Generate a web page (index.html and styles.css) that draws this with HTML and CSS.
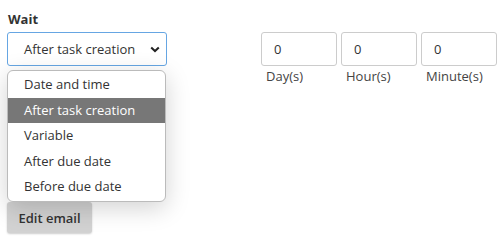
FILE: index.html
```html
<!DOCTYPE html>
<html>
<head>
<meta charset="utf-8">
<link rel="stylesheet" href="styles.css">
</head>
<body>
<div class="page">
  <div class="field-label">Wait</div>
  <div class="wait-row">
    <div class="select">
      <span class="select-value">After task creation</span>
      <svg class="chevron" width="10" height="7" viewBox="0 0 10 7"><path d="M1.2 1.4 L5 5 L8.8 1.4" fill="none" stroke="#222" stroke-width="2"/></svg>
    </div>
    <div class="durations">
      <div class="dur"><div class="num">0</div><div class="unit">Day(s)</div></div>
      <div class="dur"><div class="num">0</div><div class="unit">Hour(s)</div></div>
      <div class="dur"><div class="num">0</div><div class="unit">Minute(s)</div></div>
    </div>
  </div>
  <div class="hidden-block"></div>
  <button class="btn">Edit email</button>
  <ul class="menu">
    <li>Date and time</li>
    <li class="active">After task creation</li>
    <li>Variable</li>
    <li>After due date</li>
    <li>Before due date</li>
  </ul>
</div>
</body>
</html>
```
FILE: styles.css
```css
* { box-sizing: border-box; }
html, body { margin: 0; background: #fff; }
body { font-family: "Open Sans", "Noto Sans", sans-serif; font-size: 13px; color: #333; }
.page { position: relative; padding: 10px 0 0 7px; width: 500px; height: 252px; }
.field-label { font-weight: 700; font-size: 13px; line-height: 18px; padding-left: 1px; color: #333; }
.wait-row { display: flex; margin-top: 4px; }
.select { flex: 0 0 160px; width: 160px; height: 34px; border: 1px solid #66a6e3; border-radius: 3px; display: flex; align-items: center; justify-content: space-between; padding: 0 6px 0 16px; }
.select-value { color: #333; }
.chevron { display: block; }
.durations { display: flex; gap: 4px; margin-left: 94px; flex-shrink: 0; }
.dur { width: 76px; }
.num { height: 34px; border: 1px solid #ccc; border-radius: 3px; padding-left: 12px; display: flex; align-items: center; }
.unit { padding-left: 5px; line-height: 20px; color: #444; }
.hidden-block { height: 116px; }
.btn { display: block; font: inherit; font-weight: 600; color: #333; background: #d2d2d2; border: 0; border-radius: 3px; height: 31px; width: 85px; padding: 0; box-shadow: 0 1px 2px rgba(0,0,0,0.2); }
.menu { position: absolute; left: 7px; top: 70px; width: 159px; margin: 0; padding: 1px 0; list-style: none; background: #fff; border: 1px solid #bbb; border-radius: 6px; box-shadow: 0 6px 24px rgba(0,0,0,0.18); }
.menu li { height: 25.6px; line-height: 25.6px; padding-left: 16px; color: #333; }
.menu li.active { background: #777; color: #fff; }
```
